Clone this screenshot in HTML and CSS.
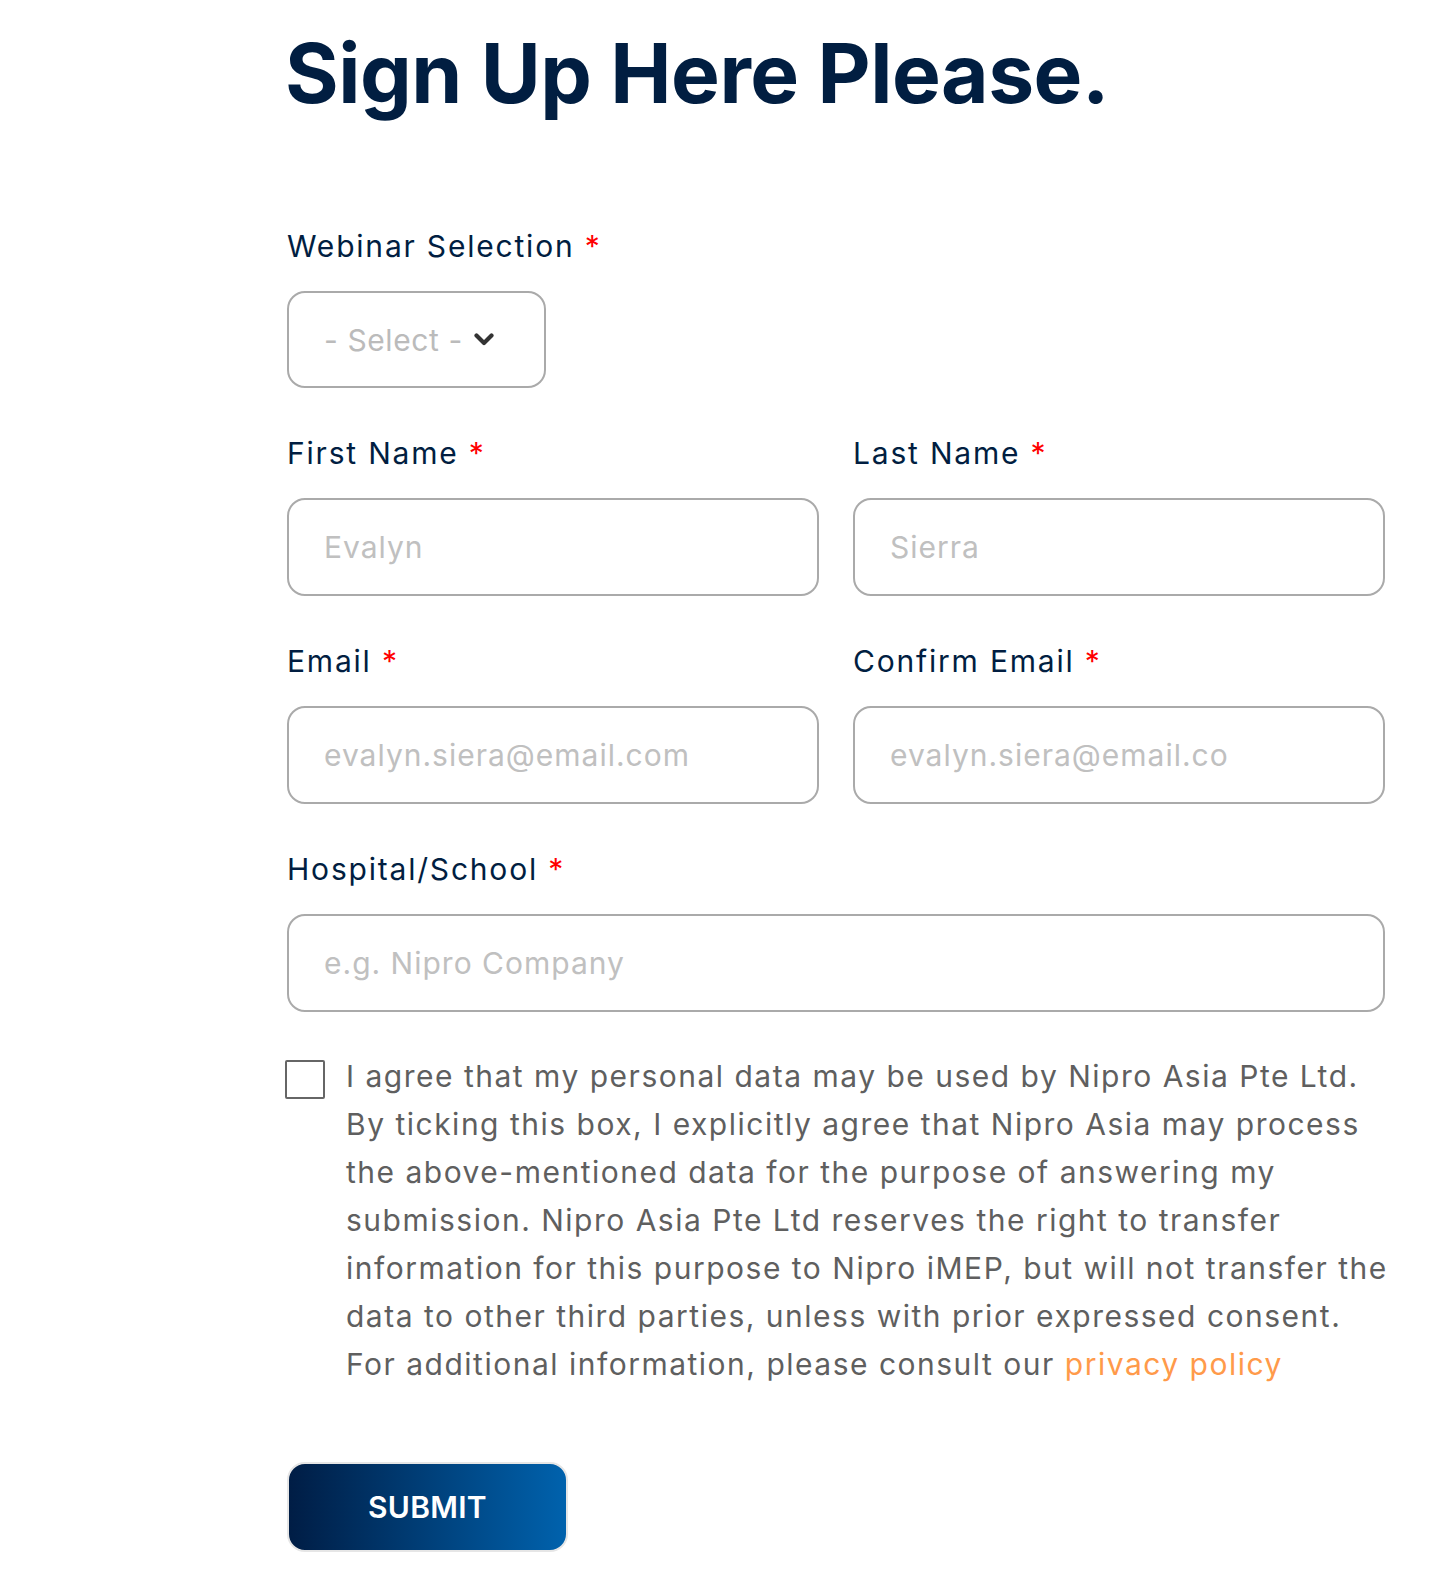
FILE: index.html
```html
<!DOCTYPE html>
<html lang="en">
<head>
<meta charset="utf-8">
<title>Sign Up Here Please.</title>
<link rel="stylesheet" href="styles.css">
</head>
<body>
<main class="page">
  <h1 class="title">Sign Up Here Please.</h1>
  <form class="form" onsubmit="return false">
    <div class="field">
      <label class="label">Webinar Selection <span class="req">*</span></label>
      <div class="select">
        <span class="select-text">- Select -</span>
        <svg class="chev" width="20" height="13" viewBox="0 0 20 13"><path d="M2.5 2.5 L10 10 L17.5 2.5" fill="none" stroke="#333" stroke-width="4.2" stroke-linecap="round" stroke-linejoin="round"/></svg>
      </div>
    </div>
    <div class="row">
      <div class="field">
        <label class="label">First Name <span class="req">*</span></label>
        <input class="input" type="text" placeholder="Evalyn">
      </div>
      <div class="field">
        <label class="label">Last Name <span class="req">*</span></label>
        <input class="input" type="text" placeholder="Sierra">
      </div>
    </div>
    <div class="row">
      <div class="field">
        <label class="label">Email <span class="req">*</span></label>
        <input class="input" type="text" placeholder="evalyn.siera@email.com">
      </div>
      <div class="field">
        <label class="label">Confirm Email <span class="req">*</span></label>
        <input class="input" type="text" placeholder="evalyn.siera@email.co">
      </div>
    </div>
    <div class="field">
      <label class="label">Hospital/School <span class="req">*</span></label>
      <input class="input" type="text" placeholder="e.g. Nipro Company">
    </div>
    <div class="consent">
      <span class="checkbox"></span>
      <p class="consent-text">I agree that my personal data may be used by Nipro Asia Pte Ltd.<br>By ticking this box, I explicitly agree that Nipro Asia may process<br>the above-mentioned data for the purpose of answering my<br>submission. Nipro Asia Pte Ltd reserves the right to transfer<br>information for this purpose to Nipro iMEP, but will not transfer the<br>data to other third parties, unless with prior expressed consent.<br>For additional information, please consult our <a class="link" href="#">privacy policy</a></p>
    </div>
    <button class="submit" type="submit">SUBMIT</button>
  </form>
</main>
</body>
</html>
```
FILE: styles.css
```css
html, body {
  margin: 0;
  padding: 0;
  background: #ffffff;
}
body {
  font-family: "Inter", "Liberation Sans", sans-serif;
  color: #011e41;
}
.page {
  padding: 24px 0 40px 287px;
  width: 1098px;
}
.title {
  margin: 0 0 102px -2px;
  font-size: 82px;
  line-height: 100px;
  font-weight: 700;
  color: #011e41;
  letter-spacing: -0.5px;
}
.form {
  display: flex;
  flex-direction: column;
}
.row {
  display: grid;
  grid-template-columns: 1fr 1fr;
  column-gap: 34px;
}
.field {
  display: flex;
  flex-direction: column;
  align-items: flex-start;
  margin-bottom: 45px;
}
.label {
  display: block;
  font-size: 30px;
  line-height: 40px;
  font-weight: 400;
  letter-spacing: 1.8px;
  color: #011e41;
  margin-bottom: 25px;
}
.req {
  color: #ff0000;
  letter-spacing: 0;
}
.select {
  box-sizing: border-box;
  width: 259px;
  height: 97px;
  border: 2px solid #aaaaaa;
  border-radius: 18px;
  display: flex;
  align-items: center;
  padding-left: 35px;
  gap: 11px;
}
.select-text {
  font-size: 30px;
  letter-spacing: 0.6px;
  color: #bbbbbb;
}
.chev {
  display: block;
}
.input {
  box-sizing: border-box;
  width: 100%;
  height: 98px;
  border: 2px solid #aaaaaa;
  border-radius: 18px;
  padding: 0 0 0 35px;
  font-family: inherit;
  font-size: 30px;
  letter-spacing: 1px;
  color: #333;
  background: #fff;
  outline: none;
}
.input::placeholder {
  color: #c0c0c0;
}
.consent {
  display: flex;
  align-items: flex-start;
  gap: 21px;
  margin-top: -5px;
  margin-left: -2px;
}
.checkbox {
  flex: none;
  box-sizing: border-box;
  width: 40px;
  height: 39px;
  border: 2px solid #666;
  border-radius: 2px;
  margin-top: 8px;
}
.consent-text {
  margin: 0;
  font-size: 30px;
  line-height: 48px;
  letter-spacing: 1.5px;
  color: #5f5f5f;
  white-space: nowrap;
}
.link {
  color: #ff9a4a;
  text-decoration: none;
}
.submit {
  align-self: flex-start;
  margin-top: 74px;
  width: 281px;
  height: 90px;
  border: 2px solid #e6e6e6;
  border-radius: 18px;
  background: linear-gradient(90deg, #001d45 0%, #0062ad 100%);
  color: #ffffff;
  font-family: inherit;
  font-size: 30px;
  font-weight: 600;
  letter-spacing: 0.3px;
  cursor: pointer;
}
```
